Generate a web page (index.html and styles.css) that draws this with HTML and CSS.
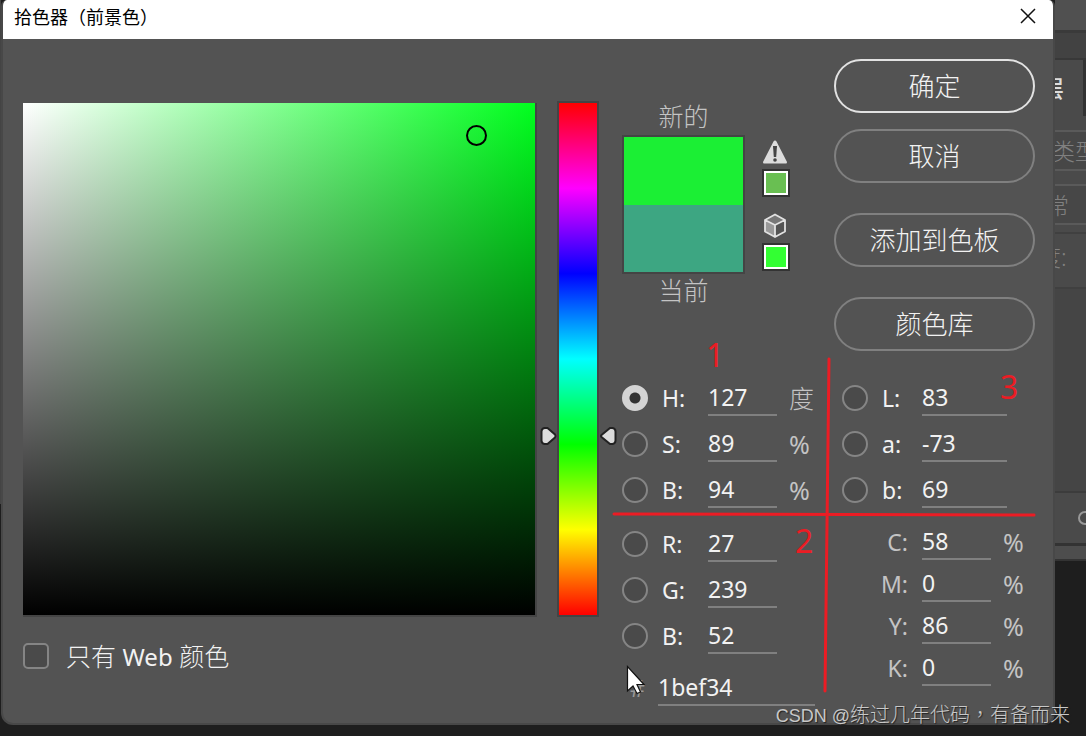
FILE: index.html
```html
<!DOCTYPE html>
<html lang="zh-CN">
<head>
<meta charset="utf-8">
<title>拾色器（前景色）</title>
<link rel="stylesheet" href="styles.css">
</head>
<body>
<div class="stage">
  <div class="edge"></div>
  <main class="dialog">
    <header class="titlebar">
      <h1 class="title">拾色器（前景色）</h1>
      <button class="close" aria-label="关闭"><svg width="16" height="16" viewBox="0 0 16 16"><path d="M1 1 15 15M15 1 1 15" fill="none" stroke="#111" stroke-width="1.5"/></svg></button>
    </header>
    <form class="body">
      <section class="picker">
        <div class="field"><span class="marker"></span></div>
        <label class="web"><input type="checkbox" class="check"><span>只有 <span class="latin">Web</span> 颜色</span></label>
      </section>
      <section class="hue">
        <svg class="handle" width="17" height="20" viewBox="0 0 17 20"><path d="M4.500 2H7.500L15 8.500Q16 10 15 11.500L7.500 18H4.500Q1.500 17.500 1.500 14.500V5.500Q1.500 2.500 4.500 2Z" fill="#dcdcdc" stroke="#222" stroke-width="2"/></svg>
        <div class="ramp"></div>
        <svg class="handle" width="18" height="20" viewBox="0 0 18 20"><path d="M13.500 2H11L2.500 9Q1.500 10 2.500 11L11 18H13.500Q16.500 17.500 16.500 14.500V5.500Q16.500 2.500 13.500 2Z" fill="#dcdcdc" stroke="#222" stroke-width="2"/></svg>
      </section>
      <section class="values">
        <div class="preview">
          <div class="compare">
            <span class="caption">新的</span>
            <div class="swatches"><div class="new"></div><div class="current"></div></div>
            <span class="caption">当前</span>
          </div>
          <div class="warnings">
            <svg width="26" height="24" viewBox="0 0 26 24"><path d="M13 0.500Q14 0.500 14.500 1.500L25 22Q25 23.500 24 23.500H2Q1 23.500 1 22L11.500 1.500Q12 0.500 13 0.500Z" fill="#dcdcdc"/><path d="M11 6H15L14.200 17H11.800Z" fill="#444"/><circle cx="13" cy="20" r="1.800" fill="#444"/></svg>
            <button type="button" class="chip print" aria-label="打印色域颜色"></button>
            <svg class="cube" width="26" height="26" viewBox="0 0 26 26"><path d="M13 1.500 23 7 13 12 3 7Z" fill="#777"/><path d="M3 7 13 12V24L3 18.500Z" fill="#999"/><path d="M13 1.500 23 7V18.500L13 24 3 18.500V7ZM3 7 13 12 23 7M13 12V24" fill="none" stroke="#e2e2e2" stroke-width="1.800" stroke-linejoin="round"/></svg>
            <button type="button" class="chip websafe" aria-label="Web 安全颜色"></button>
          </div>
        </div>
        <div class="group">
          <div class="row"><input type="radio" name="ch" id="rh" class="radio" checked><label for="rh">H:</label><input class="num" aria-label="H" value="127"><span class="unit degree">度</span></div>
          <div class="row"><input type="radio" name="ch" id="rs" class="radio"><label for="rs">S:</label><input class="num" aria-label="S" value="89"><span class="unit">%</span></div>
          <div class="row"><input type="radio" name="ch" id="rv" class="radio"><label for="rv">B:</label><input class="num" aria-label="B 亮度" value="94"><span class="unit">%</span></div>
        </div>
        <div class="group">
          <div class="row"><input type="radio" name="ch" id="rr" class="radio"><label for="rr">R:</label><input class="num" aria-label="R" value="27"></div>
          <div class="row"><input type="radio" name="ch" id="rg" class="radio"><label for="rg">G:</label><input class="num" aria-label="G" value="239"></div>
          <div class="row"><input type="radio" name="ch" id="rb" class="radio"><label for="rb">B:</label><input class="num" aria-label="B 蓝色" value="52"></div>
        </div>
        <div class="hexrow"><label for="hex">#</label><input class="num" id="hex" value="1bef34"></div>
      </section>
      <section class="actions">
        <div class="buttons">
          <button type="button" class="btn primary">确定</button>
          <button type="button" class="btn">取消</button>
          <button type="button" class="btn apart">添加到色板</button>
          <button type="button" class="btn apart">颜色库</button>
        </div>
        <div class="group lab">
          <div class="row"><input type="radio" name="ch" id="rl" class="radio"><label for="rl">L:</label><input class="num" aria-label="L" value="83"></div>
          <div class="row"><input type="radio" name="ch" id="ra" class="radio"><label for="ra">a:</label><input class="num" aria-label="a" value="-73"></div>
          <div class="row"><input type="radio" name="ch" id="rbb" class="radio"><label for="rbb">b:</label><input class="num" aria-label="b" value="69"></div>
        </div>
        <div class="cmyk">
          <div class="ink"><label for="c">C:</label><input class="num" id="c" value="58"><span class="unit">%</span></div>
          <div class="ink"><label for="m">M:</label><input class="num" id="m" value="0"><span class="unit">%</span></div>
          <div class="ink"><label for="y">Y:</label><input class="num" id="y" value="86"><span class="unit">%</span></div>
          <div class="ink"><label for="k">K:</label><input class="num" id="k" value="0"><span class="unit">%</span></div>
        </div>
      </section>
    </form>
  </main>
  <aside class="panel">
    <div class="strip"></div>
    <div class="bar"></div>
    <div class="tab"><span>层</span></div>
    <div class="box type"><span>类型</span></div>
    <div class="box mode"><span>常</span></div>
    <div class="opacity"><span>度:</span></div>
    <div class="list"></div>
    <div class="foot"><svg width="10" height="16" viewBox="0 0 10 16"><circle cx="9" cy="8" r="6" fill="none" stroke="#999" stroke-width="2"/></svg></div>
    <div class="base"></div>
  </aside>
  <svg class="notes" width="1086" height="736" viewBox="0 0 1086 736">
    <path d="M829 359 825 691M614 514 1034 515" fill="none" stroke="#ec1c24" stroke-width="3" stroke-linecap="round"/>
    <text x="706" y="367">1</text><text x="795" y="553">2</text><text x="1000" y="399">3</text>
    <path d="M627.500 666.500V691L633 686 637 693.500 640.500 692 637 684.500H644Z" fill="#fff" stroke="#111" stroke-width="1.200"/>
  </svg>
  <p class="credit"><span class="handle-name">CSDN @</span>练过几年代码<span class="comma" lang="zh-TW">，</span>有备而来</p>
</div>
</body>
</html>
```
FILE: styles.css
```css
* { box-sizing: border-box; }
body {
  margin: 0;
  background: #1e1e1e;
  font-family: "Noto Sans", "Noto Sans CJK SC", sans-serif;
  font-size: 23px;
  line-height: 28px;
  color: #f2f2f2;
}
button, input { font: inherit; color: inherit; margin: 0; padding: 0; }
.stage {
  position: relative;
  display: grid;
  grid-template-columns: 1px minmax(0, 1fr) 31px;
  align-items: start;
  min-height: 100vh;
  overflow: hidden;
}
.edge { height: 504px; background: #444; }
.dialog {
  background: #535353;
  border: 2px solid #484848;
  border-top: 0;
  border-radius: 6px 6px 12px 12px;
  overflow: hidden;
}
.titlebar {
  display: flex;
  justify-content: space-between;
  align-items: center;
  height: 39px;
  padding: 0 17px 7px 11px;
  background: #fff;
  color: #000;
}
.title { margin: 0; font-size: 18px; font-weight: 400; font-family: "Noto Sans CJK SC", sans-serif; }
.close { display: flex; border: 0; background: none; }

.body {
  display: grid;
  grid-template-columns: minmax(0, 1fr) 77px 217px 201px;
  padding: 0 18px 12px 20px;
}
.picker { padding-top: 64px; }
.field {
  position: relative;
  height: 514px;
  margin-right: 3px;
  border: solid #444;
  border-width: 0 2px 2px 0;
  background: linear-gradient(to top, #000, transparent), linear-gradient(to right, #fff, #00ff1e);
  background-clip: padding-box;
  background-origin: padding-box;
}
.marker {
  position: absolute;
  left: 443px;
  top: 22px;
  width: 21px;
  height: 21px;
  border: 2px solid #000;
  border-radius: 50%;
}
.web { display: flex; align-items: center; gap: 17px; height: 26px; margin-top: 26px; font-size: 25px; font-weight: 300; }
.latin { font-size: 24px; font-weight: 400; }
.check { appearance: none; width: 26px; height: 26px; border: 2px solid #858585; border-radius: 5px; background: #4a4a4a; }

.hue { display: flex; justify-content: space-between; padding-top: 62px; }
.ramp {
  width: 42px;
  height: 516px;
  border: 2px solid #444;
  background: linear-gradient(#f00, #f0f, #00f, #0ff, #0f0, #ff0, #f00) padding-box;
}
.handle { flex: none; margin-top: 325px; }

.values { padding-left: 5px; }
.preview { display: flex; gap: 17px; height: 271px; margin-bottom: 65px; padding-top: 63px; }
.compare { display: flex; flex-direction: column; gap: 5px; width: 123px; }
.caption { flex: none; font-size: 25px; font-weight: 300; text-align: center; color: #c4c4c4; }
.swatches { flex: none; display: flex; flex-direction: column; height: 139px; border: 2px solid #444; }
.swatches div { flex: 1; }
.caption + .swatches + .caption { margin-top: -3px; }
.new { background: #1bef34; }
.current { background: #3da682; }
.warnings { display: flex; flex-direction: column; padding-top: 38px; }
.chip { width: 28px; height: 28px; margin-top: 5px; border: 2px solid #333; box-shadow: inset 0 0 0 2px #fff; }
.print { background: #69bf52; }
.websafe { background: #3f3; margin-top: 4px; }
.cube { margin-top: 16px; }

.group { margin-bottom: 8px; }
.row { display: grid; grid-template-columns: 40px 46px 69px 1fr; align-items: center; height: 46px; }
.radio { appearance: none; width: 26px; height: 26px; border: 2px solid #858585; border-radius: 50%; background: #4a4a4a; }
.radio:checked { border-color: #d4d4d4; background: radial-gradient(circle, #333 5px, #d4d4d4 6px); }
.num { width: 100%; height: 36px; border: 0; border-bottom: 2px solid #808080; border-radius: 0; background: none; outline: 0; }
.unit { padding-left: 12px; color: #c4c4c4; font-size: 25px; }
.degree { font-weight: 300; }
.hexrow { display: grid; grid-template-columns: 36px 157px; align-items: center; height: 46px; margin-top: -2px; }
.hexrow label { padding-left: 8px; color: #999; }

.buttons { display: flex; flex-direction: column; gap: 16px; padding-top: 20px; margin-bottom: 24px; }
.btn { height: 54px; border: 2px solid #808080; border-radius: 27px; background: none; font-size: 26px; font-weight: 300; line-height: 28px; }
.primary { border-color: #e2e2e2; }
.apart { margin-top: 14px; }
.lab { padding-left: 8px; }
.lab .row { grid-template-columns: 40px 40px 85px; }
.ink { display: grid; grid-template-columns: 88px 69px 1fr; align-items: center; height: 42px; }
.ink label { padding-right: 14px; color: #c4c4c4; text-align: right; }
.ink .num { height: 36px; }

.panel { display: flex; flex-direction: column; overflow: hidden; font-weight: 300; color: #808080; background: #4a4a4a; white-space: nowrap; }
.strip { height: 33px; background: #505050; border-bottom: 3px solid #3a3a3a; }
.bar { height: 27px; background: #424242; border-bottom: 2px solid #383838; }
.tab { height: 56px; padding-top: 14px; border-right: 3px solid #333; color: #ddd; font-weight: 500; }
.tab span { margin-left: -14px; }
.box { display: flex; align-items: center; height: 41px; border: solid #5a5a5a; border-width: 2px 0; background: #474747; }
.type { margin-top: 14px; }
.mode { margin-top: 13px; }
.type span { margin-left: -3px; }
.mode span { margin-left: -9px; }
.opacity { height: 57px; margin-top: 7px; padding-top: 9px; border: solid #404040; border-width: 2px 0; }
.opacity span { margin-left: -17px; }
.list { height: 204px; background: #454545; border-bottom: 2px solid #3c3c3c; }
.foot { display: flex; align-items: center; justify-content: flex-end; height: 53px; border-bottom: 3px solid #333; }
.base { height: 15px; background: #4d4d4d; border-bottom: 2px solid #333; }

.notes { position: absolute; left: 0; top: 0; pointer-events: none; fill: #ec1c24; font-size: 32px; }
.credit {
  position: absolute;
  right: 16px;
  bottom: 6px;
  margin: 0;
  font-family: "Liberation Sans", "Noto Sans CJK SC", sans-serif;
  font-size: 20px;
  font-weight: 300;
  color: #c8c8c8;
  text-shadow: 1px 1px 1px #222;
}
.handle-name { font-size: 18px; }
.comma { font-family: "Noto Sans CJK TC", sans-serif; }
```
